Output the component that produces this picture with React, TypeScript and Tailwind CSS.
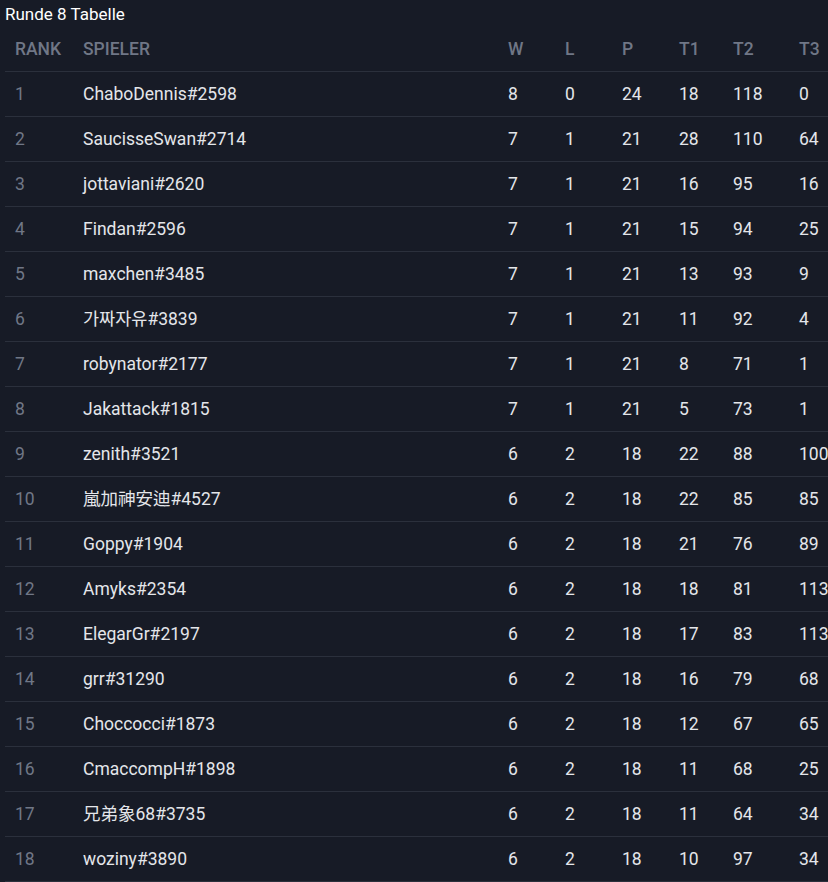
import React from "react";

const rows: [number, string, number, number, number, number, number, number][] = [
  [1, "ChaboDennis#2598", 8, 0, 24, 18, 118, 0],
  [2, "SaucisseSwan#2714", 7, 1, 21, 28, 110, 64],
  [3, "jottaviani#2620", 7, 1, 21, 16, 95, 16],
  [4, "Findan#2596", 7, 1, 21, 15, 94, 25],
  [5, "maxchen#3485", 7, 1, 21, 13, 93, 9],
  [6, "가짜자유#3839", 7, 1, 21, 11, 92, 4],
  [7, "robynator#2177", 7, 1, 21, 8, 71, 1],
  [8, "Jakattack#1815", 7, 1, 21, 5, 73, 1],
  [9, "zenith#3521", 6, 2, 18, 22, 88, 100],
  [10, "嵐加神安迪#4527", 6, 2, 18, 22, 85, 85],
  [11, "Goppy#1904", 6, 2, 18, 21, 76, 89],
  [12, "Amyks#2354", 6, 2, 18, 18, 81, 113],
  [13, "ElegarGr#2197", 6, 2, 18, 17, 83, 113],
  [14, "grr#31290", 6, 2, 18, 16, 79, 68],
  [15, "Choccocci#1873", 6, 2, 18, 12, 67, 65],
  [16, "CmaccompH#1898", 6, 2, 18, 11, 68, 25],
  [17, "兄弟象68#3735", 6, 2, 18, 11, 64, 34],
  [18, "woziny#3890", 6, 2, 18, 10, 97, 34],
];

export default function App() {
  return (
    <div
      className="w-[828px] h-[882px] overflow-hidden bg-[#171b26] text-[#e4e6ea]"
      style={{ fontFamily: 'Roboto, "Noto Sans CJK KR", "Noto Sans CJK SC", sans-serif' }}
    >
      <div className="h-[26px] pl-[5px] text-[17px] leading-[28px] text-white">Runde 8 Tabelle</div>
      <div className="pl-[5px]">
        <table className="table-fixed w-[860px] border-collapse text-[17.5px]">
          <colgroup>
            <col className="w-[68px]" />
            <col className="w-[425px]" />
            <col className="w-[57px]" />
            <col className="w-[57px]" />
            <col className="w-[57px]" />
            <col className="w-[54px]" />
            <col className="w-[66px]" />
            <col className="w-[76px]" />
          </colgroup>
          <thead>
            <tr className="h-[45px] border-b border-[#2b303c] text-left text-[#707786] font-medium">
              <th className="px-[10px] pt-[2px] font-medium">RANK</th>
              <th className="px-[10px] pt-[2px] font-medium">SPIELER</th>
              <th className="px-[10px] pt-[2px] font-medium">W</th>
              <th className="px-[10px] pt-[2px] font-medium">L</th>
              <th className="px-[10px] pt-[2px] font-medium">P</th>
              <th className="px-[10px] pt-[2px] font-medium">T1</th>
              <th className="px-[10px] pt-[2px] font-medium">T2</th>
              <th className="px-[10px] pt-[2px] font-medium">T3</th>
            </tr>
          </thead>
          <tbody>
            {rows.map((r) => (
              <tr key={r[0]} className="h-[45px] border-b border-[#2b303c]">
                <td className="px-[10px] pt-[2px] text-[#707786]">{r[0]}</td>
                <td className="px-[10px] pt-[2px] whitespace-nowrap">{r[1]}</td>
                <td className="px-[10px] pt-[2px]">{r[2]}</td>
                <td className="px-[10px] pt-[2px]">{r[3]}</td>
                <td className="px-[10px] pt-[2px]">{r[4]}</td>
                <td className="px-[10px] pt-[2px]">{r[5]}</td>
                <td className="px-[10px] pt-[2px]">{r[6]}</td>
                <td className="px-[10px] pt-[2px]">{r[7]}</td>
              </tr>
            ))}
          </tbody>
        </table>
      </div>
    </div>
  );
}
